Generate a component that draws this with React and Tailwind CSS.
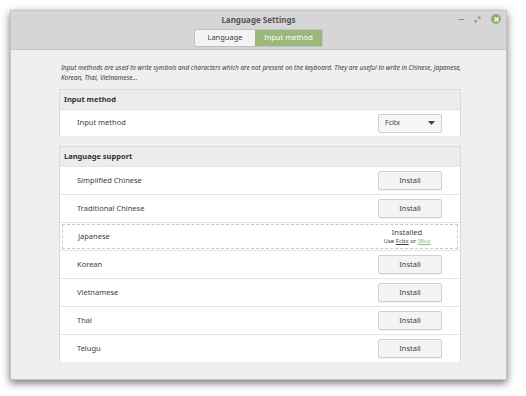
import React from "react";

const LANGS = [
  { name: "Simplified Chinese" },
  { name: "Traditional Chinese" },
  { name: "Japanese", installed: true },
  { name: "Korean" },
  { name: "Vietnamese" },
  { name: "Thai" },
  { name: "Telugu" },
];

function InstallButton() {
  return (
    <button className="w-[64px] h-[19px] rounded-[2px] border border-[#cfcfcf] bg-[#f4f4f4] text-[7.5px] text-[#3c3c3c] shadow-[0_1px_0_rgba(0,0,0,0.06)]">
      Install
    </button>
  );
}

function Row({ item }) {
  if (item.installed) {
    return (
      <div className="h-[28px] border-t border-[#e4e4e4] px-[2px] py-[1px]">
        <div className="h-full flex items-center pl-[15px] pr-[14px] border border-dashed border-[#c8c8c8]">
          <span className="flex-1 text-[7.5px] text-[#3c3c3c]">{item.name}</span>
          <div className="w-[72px] flex flex-col items-center leading-none">
            <span className="text-[7.5px] text-[#3c3c3c]">Installed</span>
            <span className="text-[6px] text-[#3c3c3c] mt-[2px]">
              Use <span className="underline">Fcitx</span> or{" "}
              <span className="underline text-[#8fbf6f]">IBus</span>
            </span>
          </div>
        </div>
      </div>
    );
  }
  return (
    <div className="h-[28px] border-t border-[#e4e4e4] flex items-center pl-[17px] pr-[18px]">
      <span className="flex-1 text-[7.5px] text-[#3c3c3c]">{item.name}</span>
      <InstallButton />
    </div>
  );
}

function SectionHeader({ tall, children }) {
  return (
    <div
      className={
        tall
          ? "h-[20px] bg-[#ececec] border-b border-[#e0e0e0] flex items-center px-[4px] text-[7.5px] font-bold text-[#333]"
          : "h-[19px] bg-[#ececec] flex items-center px-[4px] text-[7.5px] font-bold text-[#333]"
      }
    >
      {children}
    </div>
  );
}

export default function App() {
  return (
    <div className="w-[526px] h-[396px] bg-white pt-[10px] pl-[10px]" style={{ fontFamily: '"Noto Sans", sans-serif' }}>
      <div className="w-[497px] h-[370px] bg-[#efefef] border border-[#c4c4c4] shadow-[0_3px_8px_rgba(0,0,0,0.55)] flex flex-col">
        {/* header bar */}
        <div className="h-[39px] bg-[#d6d6d6] border-b border-[#c6c6c6] relative flex flex-col items-center">
          <div className="h-[18px] flex items-center text-[8px] font-bold text-[#555]">Language Settings</div>
          <div className="flex h-[18px] rounded-[2px] overflow-hidden border border-[#c2c2c2]">
            <div className="w-[60px] bg-[#f3f3f3] flex items-center justify-center text-[7.5px] text-[#3c3c3c]">Language</div>
            <div className="w-[67px] bg-[#9ab87c] flex items-center justify-center text-[7.5px] text-white">Input method</div>
          </div>
          <div className="absolute right-[5px] top-[3px] flex items-center gap-[10px]">
            <div className="w-[6px] h-[1px] bg-[#8a8a8a]" />
            <svg width="7" height="7" viewBox="0 0 7 7">
              <path d="M1 6 L3 4 M4 3 L6 1 M4 1 H6 V3 M1 4 V6 H3" stroke="#8a8a8a" strokeWidth="1" fill="none" />
            </svg>
            <div className="w-[10px] h-[10px] rounded-full bg-[#8eb366] flex items-center justify-center">
              <svg width="5" height="5" viewBox="0 0 5 5">
                <path d="M0.5 0.5 L4.5 4.5 M4.5 0.5 L0.5 4.5" stroke="white" strokeWidth="1.2" />
              </svg>
            </div>
          </div>
        </div>

        {/* content */}
        <div className="pl-[48px] pr-[45px]">
          <p className="mt-[13px] pl-[2px] text-[6.4px] leading-[10px] italic text-[#3a3a3a] whitespace-nowrap">
            Input methods are used to write symbols and characters which are not present on the keyboard. They are useful to write in Chinese, Japanese,
            <br />
            Korean, Thai, Vietnamese...
          </p>

          <div className="mt-[6px] bg-white border border-[#dadada] border-b-0">
            <SectionHeader tall>Input method</SectionHeader>
            <div className="h-[26px] flex items-center pl-[17px] pr-[18px]">
              <span className="flex-1 text-[7.5px] text-[#3c3c3c]">Input method</span>
              <div className="w-[64px] h-[19px] rounded-[2px] border border-[#cfcfcf] bg-[#f6f6f6] flex items-center pl-[6px] pr-[6px]">
                <span className="flex-1 text-[7px] text-[#3c3c3c]">Fcitx</span>
                <svg width="7" height="4" viewBox="0 0 7 4">
                  <path d="M0 0 H7 L3.5 4 Z" fill="#444" />
                </svg>
              </div>
            </div>
          </div>

          <div className="mt-[10px] bg-white border border-[#dadada] border-b-0">
            <SectionHeader>Language support</SectionHeader>
            {LANGS.map((l) => (
              <Row key={l.name} item={l} />
            ))}
          </div>
        </div>
      </div>
    </div>
  );
}
